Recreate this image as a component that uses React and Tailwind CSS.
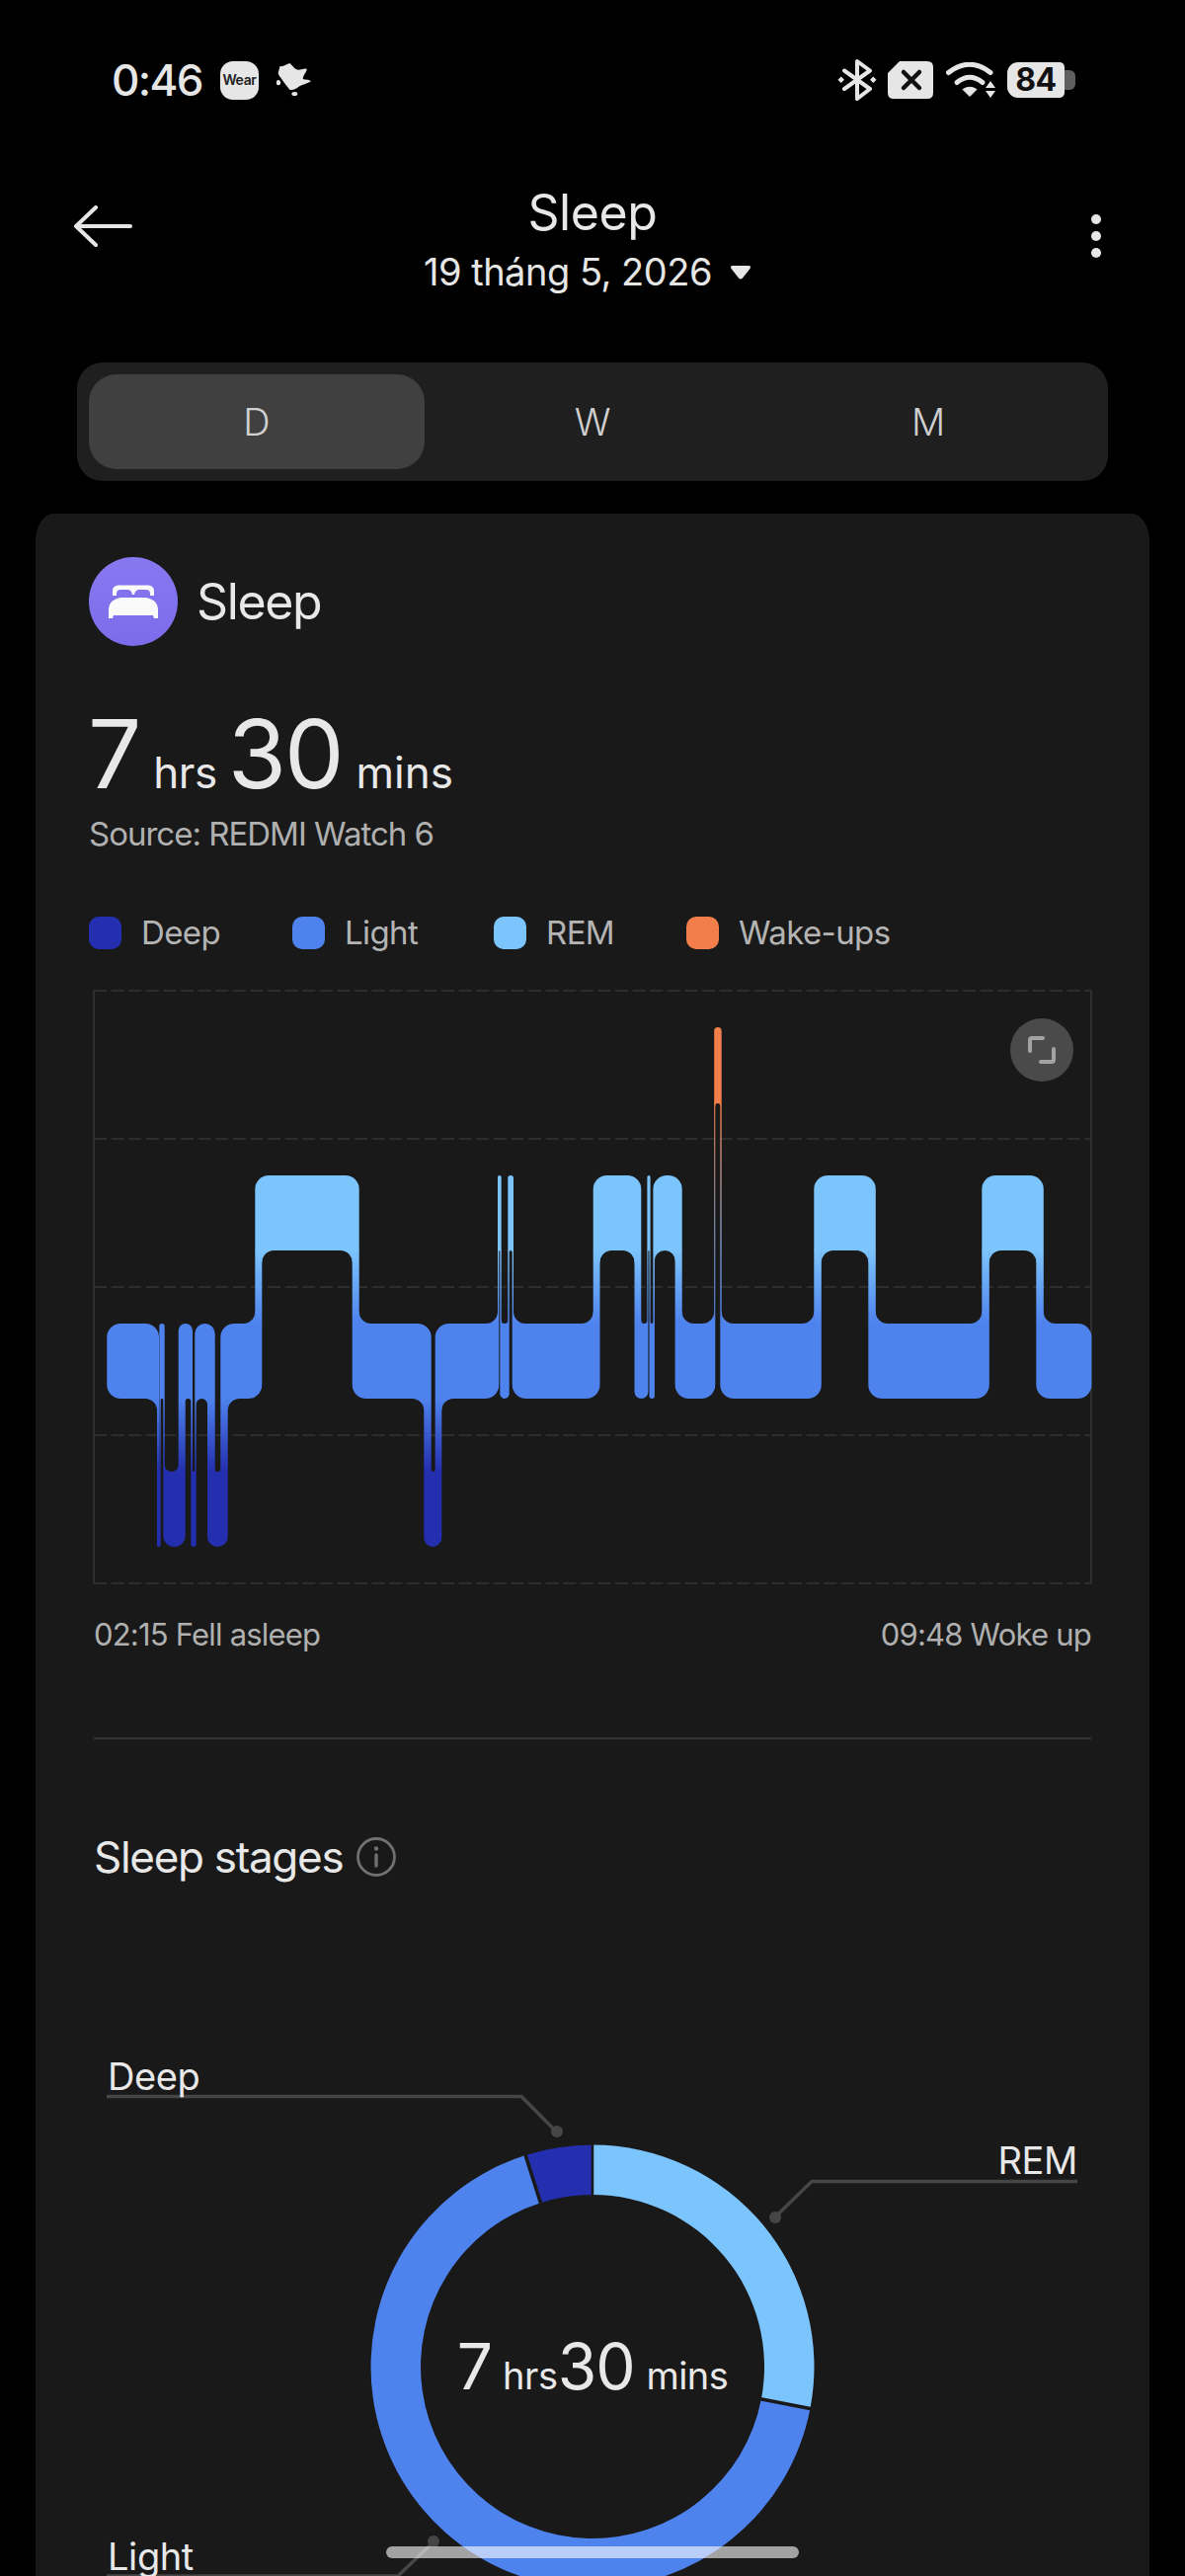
import React from "react";

const BAND = { wake: [1039, 1116], rem: [1189, 1265], light: [1339, 1415], deep: [1489, 1565] };
const ORDER = { wake: 0, rem: 1, light: 2, deep: 3 };
const SEGS = [
  ["light", 108.3, 161], ["deep", 159, 162.7], ["light", 161.3, 166.7], ["deep", 165.3, 187.7],
  ["light", 180.7, 195], ["deep", 193.3, 198.7], ["light", 197.3, 217.7], ["deep", 210, 230.7],
  ["light", 223.3, 265.3], ["rem", 258.3, 363.7], ["light", 356.7, 436.7], ["deep", 429.3, 447.3],
  ["light", 440.7, 505.3], ["rem", 504, 507.7], ["light", 506.3, 515.7], ["rem", 514.3, 520],
  ["light", 518.7, 607.5], ["rem", 600.7, 649.3], ["light", 642.5, 656.4], ["rem", 655.4, 658.6],
  ["light", 657.5, 662.9], ["rem", 661.4, 690.7], ["light", 683.6, 724.3], ["wake", 723.2, 730.7],
  ["light", 729.3, 831.8], ["rem", 824.3, 886.8], ["light", 879.3, 1001.8], ["rem", 994.3, 1056.8],
  ["light", 1049.3, 1105.4],
];
const FLAT = { wake: "#f27f4b", rem: "#7cc4fc", light: "#4e83ee", deep: "#232fae" };

// rounded rectangle with one radius per corner: top-left, top-right, bottom-right, bottom-left
function rr(x0, y0, x1, y1, r0, [tl, tr, br, bl]) {
  const m = Math.min(r0, (x1 - x0) / 2);
  const a = tl ? m : 0;
  const b = tr ? m : 0;
  const c = br ? m : 0;
  const d = bl ? m : 0;
  return `M${x0 + a} ${y0}H${x1 - b}A${b} ${b} 0 0 1 ${x1} ${y0 + b}V${y1 - c}A${c} ${c} 0 0 1 ${x1 - c} ${y1}H${x0 + d}A${d} ${d} 0 0 1 ${x0} ${y1 - d}V${y0 + a}A${a} ${a} 0 0 1 ${x0 + a} ${y0}Z`;
}

function Hypnogram() {
  const out = [];
  SEGS.forEach(([s, x0, x1], i) => {
    const prev = i > 0 ? SEGS[i - 1][0] : null;
    const next = i < SEGS.length - 1 ? SEGS[i + 1][0] : null;
    const tl = !(prev && ORDER[prev] < ORDER[s]);
    const bl = !(prev && ORDER[prev] > ORDER[s]);
    const tr = !(next && ORDER[next] < ORDER[s]);
    const br = !(next && ORDER[next] > ORDER[s]);
    out.push(<path key={`r${i}`} d={rr(x0, BAND[s][0], x1, BAND[s][1], 14, [tl, tr, br, bl])} fill={FLAT[s]} />);
  });
  for (let i = 0; i < SEGS.length - 1; i++) {
    const [sa, ax0, ax1] = SEGS[i];
    const [sb, bx0, bx1] = SEGS[i + 1];
    const cx0 = bx0;
    const cx1 = ax1;
    const down = ORDER[sb] > ORDER[sa];
    const top = down ? BAND[sa][1] : BAND[sb][1];
    const bot = down ? BAND[sb][0] : BAND[sa][0];
    const wake = sa === "wake" || sb === "wake";
    const fill = wake ? "url(#wakeGrad)" : "url(#mainGrad)";
    out.push(<rect key={`c${i}`} x={cx0} y={top - 0.5} width={cx1 - cx0} height={bot - top + 1} fill={fill} />);
    let availL = cx0 - ax0;
    if (i > 0) {
      const prev = SEGS[i - 1];
      const prevDown = ORDER[sa] > ORDER[prev[0]];
      if (prevDown !== down) availL = (cx0 - prev[2]) / 2;
    }
    const wl = Math.min(12, availL);
    const yA = down ? BAND[sa][1] : BAND[sa][0];
    const dirA = down ? 1 : -1;
    if (wl > 0) {
      out.push(
        <path
          key={`fl${i}`}
          d={`M${cx0 - wl} ${yA - dirA * 0.5}L${cx0 + 0.5} ${yA - dirA * 0.5}V${yA + dirA * wl}L${cx0} ${yA + dirA * wl}A${wl} ${wl} 0 0 ${dirA < 0 ? 1 : 0} ${cx0 - wl} ${yA}Z`}
          fill={fill}
        />
      );
    }
    let availR = bx1 - cx1;
    if (i < SEGS.length - 2) {
      const next = SEGS[i + 2];
      const nextDown = ORDER[next[0]] > ORDER[sb];
      if (nextDown !== down) availR = (next[1] - cx1) / 2;
    }
    const wr = Math.min(12, availR);
    const yB = down ? BAND[sb][0] : BAND[sb][1];
    const dirB = down ? -1 : 1;
    if (wr > 0) {
      out.push(
        <path
          key={`fr${i}`}
          d={`M${cx1 + wr} ${yB - dirB * 0.5}L${cx1 - 0.5} ${yB - dirB * 0.5}V${yB + dirB * wr}L${cx1} ${yB + dirB * wr}A${wr} ${wr} 0 0 ${dirB > 0 ? 1 : 0} ${cx1 + wr} ${yB}Z`}
          fill={fill}
        />
      );
    }
  }
  const dash = { stroke: "#343434", strokeWidth: 1.6, strokeDasharray: "13 4.6" };
  return (
    <svg viewBox="95 1002 1010 600" className="block w-[1010px] h-[600px] overflow-visible">
      <defs>
        <linearGradient id="mainGrad" gradientUnits="userSpaceOnUse" x1="0" x2="0" y1="1189" y2="1565">
          <stop offset="0.202" stopColor="#7cc4fc" />
          <stop offset="0.399" stopColor="#4e83ee" />
          <stop offset="0.601" stopColor="#4e83ee" />
          <stop offset="0.798" stopColor="#232fae" />
        </linearGradient>
        <linearGradient id="wakeGrad" gradientUnits="userSpaceOnUse" x1="0" x2="0" y1="1116" y2="1339">
          <stop offset="0" stopColor="#f27f4b" />
          <stop offset="0.55" stopColor="#8a9ab8" />
          <stop offset="1" stopColor="#4e83ee" />
        </linearGradient>
      </defs>
      {[1002, 1152, 1302, 1452, 1602].map((y) => (
        <line key={y} x1="95" x2="1105" y1={y} y2={y} {...dash} />
      ))}
      <line x1="95" x2="95" y1="1002" y2="1602" stroke="#343434" strokeWidth="1.6" />
      <line x1="1105" x2="1105" y1="1002" y2="1602" stroke="#343434" strokeWidth="1.6" />
      {out}
      <circle cx="1055" cy="1062" r="32" fill="#4a4a4a" />
      <path d="M1043 1063V1052a2 2 0 0 1 2-2H1056M1067 1061V1072a2 2 0 0 1-2 2H1054" fill="none" stroke="#a3a3a3" strokeWidth="4" strokeLinecap="round" />
    </svg>
  );
}

function sector(a0, a1, R, r) {
  const p = (a, rad) => {
    const t = (a * Math.PI) / 180;
    return `${600 + rad * Math.sin(t)} ${2395 - rad * Math.cos(t)}`;
  };
  const large = a1 - a0 > 180 ? 1 : 0;
  return `M${p(a0, R)}A${R} ${R} 0 ${large} 1 ${p(a1, R)}L${p(a1, r)}A${r} ${r} 0 ${large} 0 ${p(a0, r)}Z`;
}

function sep(a) {
  const t = (a * Math.PI) / 180;
  return {
    x1: 600 + 172 * Math.sin(t),
    y1: 2395 - 172 * Math.cos(t),
    x2: 600 + 227 * Math.sin(t),
    y2: 2395 - 227 * Math.cos(t),
  };
}

function Donut() {
  const l = { fill: "none", stroke: "#464646", strokeWidth: 3.5 };
  return (
    <svg viewBox="95 1960 1010 700" className="absolute left-0 top-0 w-[1010px] h-[700px]">
      <path d={sector(0, 100.9, 224.5, 174)} fill="#7cc4fc" />
      <path d={sector(100.9, 342.4, 224.5, 174)} fill="#4e83ee" />
      <path d={sector(342.4, 360, 224.5, 174)} fill="#232fae" />
      <line {...sep(0)} stroke="#191919" strokeWidth="2.5" />
      <line {...sep(100.9)} stroke="#191919" strokeWidth="3.5" />
      <line {...sep(342.4)} stroke="#191919" strokeWidth="3.5" />
      <path d="M108 2121.5H528L563 2156.7" {...l} />
      <circle cx="564" cy="2157" r="6" fill="#464646" />
      <path d="M1091 2207.5H822L785 2243.6" {...l} />
      <circle cx="785" cy="2244" r="6" fill="#464646" />
      <path d="M108 2607H403L439 2572.6" {...l} />
      <circle cx="439" cy="2572" r="6" fill="#464646" />
    </svg>
  );
}

function StatusBar() {
  return (
    <div className="flex items-center justify-between h-[42px] mt-[60px] pl-[113px] pr-[111px]">
      <div className="flex items-center">
        <span className="text-[44px] leading-none font-medium text-[#e6e6e6] tracking-[-1.6px]">0:46</span>
        <div className="ml-[18px] w-[39px] h-[39px] rounded-[13px] bg-[#e6e6e6] flex items-center justify-center">
          <span className="text-[14px] leading-none font-semibold text-[#222] tracking-[-0.4px]">Wear</span>
        </div>
        <svg viewBox="0 0 36 34" className="ml-[18px] w-[36px] h-[34px]" fill="#e6e6e6">
          <path d="M3.3 3.3C7 3.5 10 1 13.3 0C16 2 18 6 21.7 6.7C25 7 28 5 30.7 5.7C30.5 9 27 12 26.7 15.7C29 17 33 16 35 18.3C31 21 27 21 23.3 23.3C20 26 16 28 13.3 26.7C11 24 9 21 6.7 18.3C5 15 2 13 1.7 10C2 8 3 6 3.3 3.3Z" />
          <ellipse cx="2" cy="19.7" rx="2.2" ry="2.6" />
          <ellipse cx="18.3" cy="31" rx="3" ry="2" />
        </svg>
      </div>
      <div className="flex items-center">
        <svg viewBox="848 60 42 42" className="w-[42px] h-[42px]">
          <path d="M855 71.5L881 90L868 100V62L881 71.5L855 90" fill="none" stroke="#e6e6e6" strokeWidth="4" strokeLinejoin="round" strokeLinecap="round" />
          <path d="M851.7 77.5L855 80.7L851.7 84L848.5 80.7ZM884.3 77.5L887.5 80.7L884.3 84L881 80.7Z" fill="#e6e6e6" />
        </svg>
        <svg viewBox="899 62 46 38" className="ml-[9px] w-[46px] h-[38px]">
          <path d="M911 62H939Q945 62 945 68V94Q945 100 939 100H905Q899 100 899 94V74Z" fill="#e6e6e6" />
          <path d="M915 73L931 89M931 73L915 89" stroke="#111" strokeWidth="4.5" strokeLinecap="round" />
        </svg>
        <svg viewBox="958 64 50 36" className="ml-[13px] w-[50px] h-[36px]">
          <path d="M960.5 74.5Q982 58 1003 74.5" fill="none" stroke="#e6e6e6" strokeWidth="5" strokeLinecap="round" />
          <path d="M969 84.5Q982 74 995 84.5" fill="none" stroke="#e6e6e6" strokeWidth="5" strokeLinecap="round" />
          <path d="M975 91.5Q982 87 989 91.5L982 98.5Z" fill="#e6e6e6" stroke="#e6e6e6" strokeWidth="1" strokeLinejoin="round" />
          <path d="M1003 83L1008 90H998ZM998 93H1008L1003 100Z" fill="#e6e6e6" />
        </svg>
        <div className="ml-[12px] flex items-center">
          <div className="w-[58px] h-[36px] rounded-l-[11px] rounded-r-[5px] bg-[#e6e6e6] flex items-center justify-center">
            <span className="text-[32px] leading-none font-bold text-[#111] tracking-[-0.5px]">84</span>
          </div>
          <div className="w-[11px] h-[20px] rounded-r-[6px] bg-[#5f5f5f]" />
        </div>
      </div>
    </div>
  );
}

function Header() {
  return (
    <div className="relative h-[196px] mt-[69px]">
      <svg viewBox="0 0 60 42" className="absolute left-[74px] top-[37px] w-[60px] h-[42px]" fill="none" stroke="#e6e6e6" strokeWidth="4" strokeLinecap="round" strokeLinejoin="round">
        <path d="M58 21H4M23 2L3 21L23 40" />
      </svg>
      <div className="flex flex-col items-center">
        <div className="text-[50px] leading-[60px] font-normal tracking-[-0.4px] text-[#e8e8e8] mt-[14px]">Sleep</div>
        <div className="flex items-center mt-[6px] mr-[10px]">
          <span className="text-[38px] leading-[48px] font-normal text-[#e6e6e6] tracking-[-0.5px]">19 tháng 5, 2026</span>
          <svg viewBox="0 0 22 15" className="ml-[18px] w-[22px] h-[15px]" fill="#e6e6e6">
            <path d="M3 1H19Q22 1 20.5 4L13 13.5Q11 15.5 9 13.5L1.5 4Q0 1 3 1Z" />
          </svg>
        </div>
      </div>
      <div className="absolute left-[1105px] top-[46px] flex flex-col gap-[7px]">
        <div className="w-[10px] h-[10px] rounded-full bg-[#e6e6e6]" />
        <div className="w-[10px] h-[10px] rounded-full bg-[#e6e6e6]" />
        <div className="w-[10px] h-[10px] rounded-full bg-[#e6e6e6]" />
      </div>
    </div>
  );
}

function Segments() {
  return (
    <div className="mx-[78px] h-[120px] rounded-[26px] bg-[#1f1f1f] p-[12px] flex">
      <div className="w-[340px] rounded-[28px] bg-[#404040] flex items-center justify-center text-[38px] font-light text-[#d0d0d0]">D</div>
      <div className="w-[340px] flex items-center justify-center text-[38px] font-light text-[#d0d0d0]">W</div>
      <div className="w-[340px] flex items-center justify-center text-[38px] font-light text-[#d0d0d0]">M</div>
    </div>
  );
}

function Legend({ color, label, className }) {
  return (
    <div className={`flex items-center gap-[20px] ${className}`}>
      <div className="w-[33px] h-[33px] rounded-[10px]" style={{ backgroundColor: color }} />
      <span className="text-[33px] leading-none font-normal tracking-[-0.6px] text-[#b4b4b4]">{label}</span>
    </div>
  );
}

export default function App() {
  return (
    <div className="relative w-[1200px] h-[2608px] bg-black overflow-hidden" style={{ fontFamily: "Inter, 'Liberation Sans', sans-serif" }}>
      <StatusBar />
      <Header />
      <Segments />
      <div className="mt-[33px] mx-[36px] h-[2100px] rounded-tl-[18px_28px] rounded-tr-[18px_28px] bg-[#191919] overflow-hidden">
        <div className="pl-[54px] pt-[44px] flex items-center">
          <div className="w-[90px] h-[90px] rounded-full bg-gradient-to-b from-[#8878f0] to-[#7d6cea] flex items-center justify-center">
            <svg viewBox="0 0 50 34" className="w-[50px] h-[34px]" fill="#fafafa">
              <path d="M4 11V6Q4 1 10 0.5H40Q46 1 46 6V11H42V9Q42 5 38 5H31Q27 5 26 10H24Q23 5 19 5H12Q8 5 8 9V11Z" />
              <path d="M12 13H38Q49 15 50 24V34H46L45 31H5L4 34H0V24Q1 15 12 13Z" />
            </svg>
          </div>
          <span className="ml-[19px] text-[50px] leading-none font-normal tracking-[-1.4px] text-[#e8e8e8]">Sleep</span>
        </div>
        <div className="pl-[53px] mt-[64px] flex items-baseline h-[90px] text-[#e8e8e8] font-normal">
          <span className="text-[96px] leading-[90px] tracking-[-1px]">7</span>
          <span className="ml-[13px] text-[44px] leading-none tracking-[-0.5px]">hrs</span>
          <span className="ml-[11px] text-[96px] leading-[90px] tracking-[-2px]">30</span>
          <span className="ml-[14px] text-[44px] leading-none">mins</span>
        </div>
        <div className="pl-[54px] mt-[16px] text-[33px] leading-[40px] font-normal tracking-[-1px] text-[#b0b0b0]">Source: REDMI Watch 6</div>
        <div className="pl-[54px] mt-[64px] flex h-[33px]">
          <Legend color="#232fae" label="Deep" className="w-[206px]" />
          <Legend color="#4e83ee" label="Light" className="w-[204px]" />
          <Legend color="#7cc4fc" label="REM" className="w-[195px]" />
          <Legend color="#f27f4b" label="Wake-ups" className="" />
        </div>
        <div className="ml-[59px] mt-[42px] w-[1010px]">
          <Hypnogram />
          <div className="mt-[33px] flex justify-between text-[31px] leading-[38px] font-normal tracking-[-0.8px] text-[#b0b0b0]">
            <span>02:15 Fell asleep</span>
            <span>09:48 Woke up</span>
          </div>
          <div className="mt-[85px] h-[2px] bg-[#333]" />
          <div className="mt-[91px] flex items-center">
            <span className="text-[44px] leading-[56px] font-normal tracking-[-1.3px] text-[#e8e8e8]">Sleep stages</span>
            <svg viewBox="0 0 40 40" className="ml-[14px] w-[40px] h-[40px]" fill="none">
              <circle cx="20" cy="20" r="18.5" stroke="#707070" strokeWidth="2.8" />
              <path d="M20 18V29" stroke="#707070" strokeWidth="3.4" strokeLinecap="round" />
              <circle cx="20" cy="11.5" r="2.2" fill="#707070" />
            </svg>
          </div>
          <div className="relative mt-[53px] h-[700px]">
            <Donut />
            <span className="absolute left-[14px] top-[119px] text-[38px] leading-[44px] font-normal tracking-[-0.4px] text-[#e8e8e8]">Deep</span>
            <span className="absolute right-[14px] top-[204px] text-[38px] leading-[44px] font-normal tracking-[-0.4px] text-[#e8e8e8]">REM</span>
            <span className="absolute left-[14px] top-[605px] text-[38px] leading-[44px] font-normal tracking-[-0.4px] text-[#e8e8e8]">Light</span>
            <div className="absolute left-0 right-0 top-[400px] flex justify-center items-baseline text-[#e8e8e8] font-normal">
              <span className="text-[64px] leading-[70px]">7</span>
              <span className="ml-[10px] text-[38px] leading-none tracking-[-0.4px]">hrs</span>
              <span className="text-[64px] leading-[70px] tracking-[-1px]">30</span>
              <span className="ml-[12px] text-[38px] leading-none tracking-[-0.6px]">mins</span>
            </div>
          </div>
        </div>
      </div>
      <div className="absolute left-[391px] top-[2578px] w-[418px] h-[12px] rounded-full bg-white/60" />
    </div>
  );
}
